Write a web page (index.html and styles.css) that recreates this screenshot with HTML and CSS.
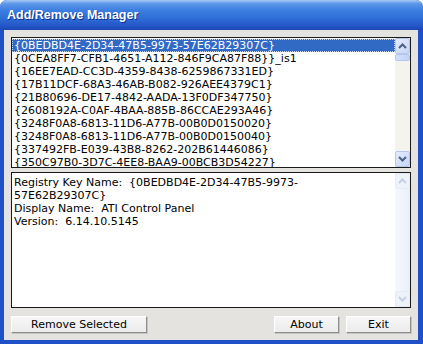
FILE: index.html
```html
<!DOCTYPE html>
<html lang="en">
<head>
    <meta charset="UTF-8">
    <title>Add/Remove Manager</title>
    <link rel="stylesheet" href="styles.css">
</head>
<body>
    <div class="window">
        <div class="title-bar">Add/Remove Manager</div>

        <div class="client">
            <div class="list-box">
                <ul class="list-items">
                    <li class="selected">{0BEDBD4E-2D34-47B5-9973-57E62B29307C}</li>
                    <li>{0CEA8FF7-CFB1-4651-A112-846F9CA87F88}}_is1</li>
                    <li>{16EE7EAD-CC3D-4359-8438-6259867331ED}</li>
                    <li>{17B11DCF-68A3-46AB-B082-926AEE4379C1}</li>
                    <li>{21B80696-DE17-4842-AADA-13F0DF347750}</li>
                    <li>{2608192A-C0AF-4BAA-885B-86CCAE293A46}</li>
                    <li>{3248F0A8-6813-11D6-A77B-00B0D0150020}</li>
                    <li>{3248F0A8-6813-11D6-A77B-00B0D0150040}</li>
                    <li>{337492FB-E039-43B8-8262-202B61446086}</li>
                    <li>{350C97B0-3D7C-4EE8-BAA9-00BCB3D54227}</li>
                </ul>
                <div class="scrollbar">
                    <div class="sb-button">
                        <svg width="9" height="6" viewBox="0 0 9 6"><path d="M1 5 L4.5 1.5 L8 5" fill="none" stroke="#4d6185" stroke-width="2"/></svg>
                    </div>
                    <div class="sb-thumb"></div>
                    <div class="sb-track"></div>
                    <div class="sb-button">
                        <svg width="9" height="6" viewBox="0 0 9 6"><path d="M1 1 L4.5 4.5 L8 1" fill="none" stroke="#4d6185" stroke-width="2"/></svg>
                    </div>
                </div>
            </div>

            <div class="detail-box">
                <div class="detail-text">
                    <div>Registry Key Name:&nbsp; {0BEDBD4E-2D34-47B5-9973-</div>
                    <div>57E62B29307C}</div>
                    <div>Display Name:&nbsp; ATI Control Panel</div>
                    <div>Version:&nbsp; 6.14.10.5145</div>
                </div>
                <div class="scrollbar disabled">
                    <div class="sb-button">
                        <svg width="9" height="6" viewBox="0 0 9 6"><path d="M1 5 L4.5 1.5 L8 5" fill="none" stroke="#c3d0e6" stroke-width="2"/></svg>
                    </div>
                    <div class="sb-track"></div>
                    <div class="sb-button">
                        <svg width="9" height="6" viewBox="0 0 9 6"><path d="M1 1 L4.5 4.5 L8 1" fill="none" stroke="#c3d0e6" stroke-width="2"/></svg>
                    </div>
                </div>
            </div>

            <div class="button-row">
                <button class="btn btn-wide">Remove Selected</button>
                <div class="spacer"></div>
                <button class="btn">About</button>
                <button class="btn">Exit</button>
            </div>
        </div>
    </div>
</body>
</html>
```

FILE: styles.css
```css
* {
    margin: 0;
    padding: 0;
    box-sizing: border-box;
}

body {
    width: 423px;
    height: 344px;
    overflow: hidden;
    background: #ffffff;
    font-family: 'DejaVu Sans', Verdana, sans-serif;
    font-size: 11px;
    color: #000000;
}

.window {
    width: 423px;
    height: 344px;
    display: flex;
    flex-direction: column;
    background: #1f50c8;
    border-radius: 7px 7px 0 0;
    overflow: hidden;
}

.title-bar {
    height: 30px;
    flex-shrink: 0;
    padding: 8px 0 0 7px;
    color: #ffffff;
    font-family: 'Liberation Sans', Arial, sans-serif;
    font-weight: bold;
    font-size: 12.5px;
    text-shadow: 1px 1px 0 #0f2f8c;
    background: linear-gradient(180deg, #a9c9f4 0%, #5e98ea 12%, #3b7ee0 35%, #2f6fd8 60%, #2457c8 85%, #1c47b4 100%);
}

.client {
    flex: 1;
    margin: 0 5px 4px 4px;
    padding: 7px;
    background: #e4e3df;
    display: flex;
    flex-direction: column;
}

.list-box {
    height: 131px;
    flex-shrink: 0;
    display: flex;
    background: #ffffff;
    border: 1px solid #1a1a1a;
}

.list-items {
    flex: 1;
    list-style: none;
    padding-top: 1px;
    overflow: hidden;
}

.list-items li {
    height: 13px;
    line-height: 13px;
    padding-left: 2px;
    white-space: nowrap;
}

.list-items li.selected {
    background: #316ac5;
    color: #ffffff;
    outline: 1px dotted #c8d6ee;
    outline-offset: -1px;
}

.scrollbar {
    width: 15px;
    flex-shrink: 0;
    display: flex;
    flex-direction: column;
    background: #f4f3ee;
}

.sb-button {
    height: 16px;
    display: flex;
    align-items: center;
    justify-content: center;
    border: 1px solid #b5c7ea;
    border-radius: 2px;
    background: linear-gradient(135deg, #e4ecfd 0%, #c6d5f6 100%);
}

.sb-thumb {
    height: 7px;
    border: 1px solid #b5c7ea;
    border-radius: 2px;
    background: linear-gradient(90deg, #d4e0f9 0%, #c2d2f5 100%);
}

.sb-track {
    flex: 1;
}

.scrollbar.disabled {
    background: linear-gradient(90deg, #f6f8fd 0%, #e9eff9 100%);
}

.scrollbar.disabled .sb-button {
    border-color: #e4eaf6;
    background: #eef2fa;
}

.detail-box {
    flex: 1;
    margin-top: 4px;
    display: flex;
    background: #ffffff;
    border: 1px solid #1a1a1a;
}

.detail-text {
    flex: 1;
    padding: 3px 0 0 2px;
    line-height: 13px;
}

.button-row {
    display: flex;
    gap: 7px;
    margin-top: 8px;
    height: 17px;
    flex-shrink: 0;
}

.spacer {
    flex: 1;
}

.btn {
    width: 65px;
    height: 17px;
    font-family: 'DejaVu Sans', Verdana, sans-serif;
    font-size: 11px;
    color: #000000;
    background: linear-gradient(180deg, #f7f7f7 0%, #ebebeb 100%);
    border: 1px solid;
    border-color: #ffffff #8e8e8e #8e8e8e #ffffff;
    box-shadow: 1px 1px 0 #c4c4c4;
}

.btn-wide {
    width: 136px;
}
```
